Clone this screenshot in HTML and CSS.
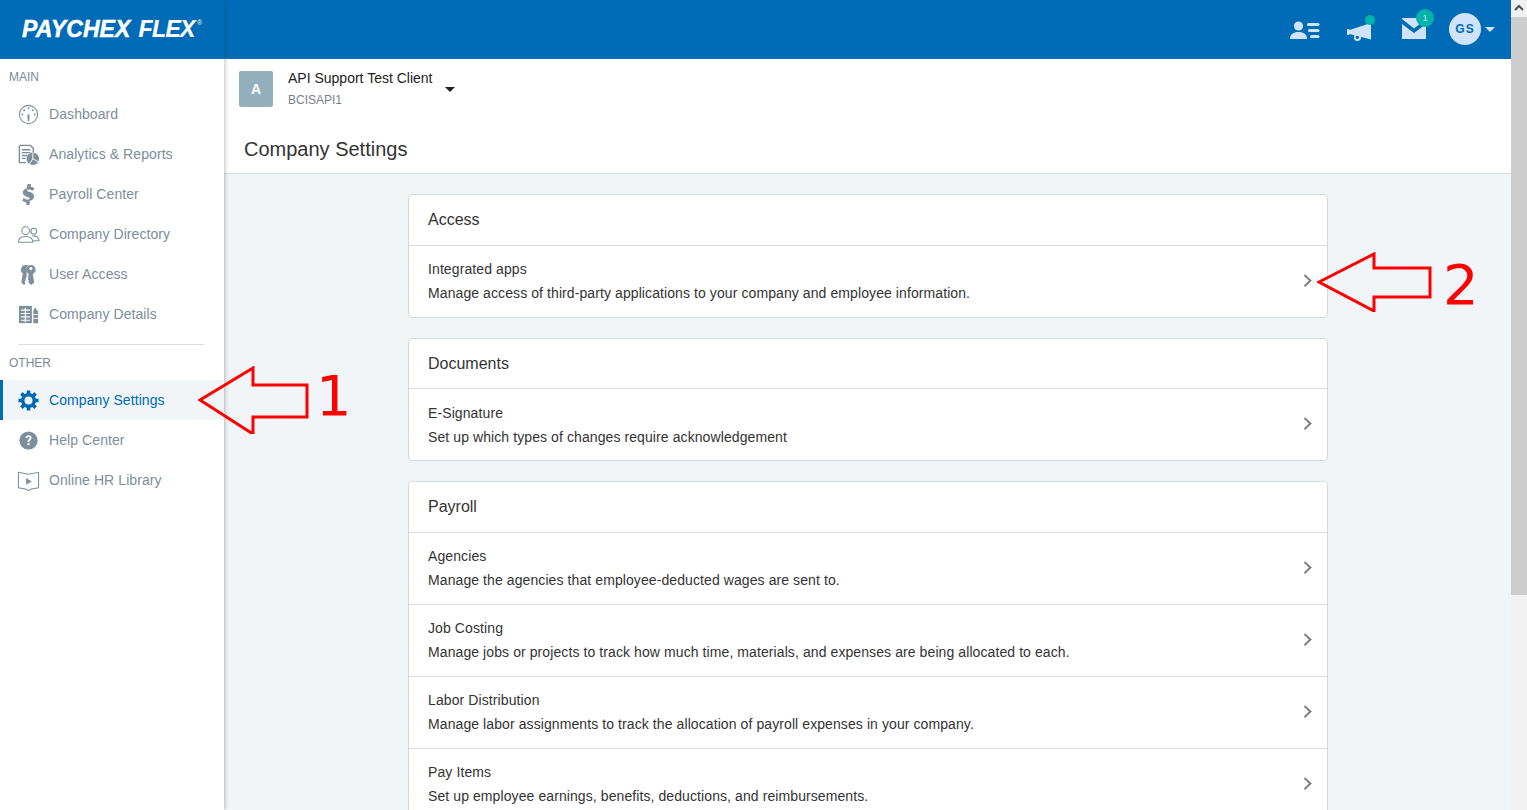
FILE: index.html
```html
<!DOCTYPE html>
<html lang="en">
<head>
<meta charset="utf-8">
<title>Company Settings</title>
<link rel="stylesheet" href="styles.css">
</head>
<body>
<div class="app">
  <aside class="sidebar">
    <div class="logo"><span class="logo-text">PAYCHEX</span><span class="logo-flex">FLEX</span><span class="logo-r">®</span></div>
    <nav class="nav">
      <div class="nav-label">MAIN</div>
      <a class="nav-item"><svg class="nav-icon" viewBox="0 0 24 24"><circle cx="12" cy="12" r="9.5" fill="none" stroke="currentColor" stroke-width="1.1"/><path d="M10.8 12h2.4l-.5 7h-1.4z" fill="currentColor"/><g fill="currentColor"><circle cx="12" cy="5.5" r="1"/><circle cx="7.5" cy="7.5" r="1"/><circle cx="16.5" cy="7.5" r="1"/><circle cx="5.6" cy="12" r="1"/><circle cx="18.4" cy="12" r="1"/></g></svg><span>Dashboard</span></a>
      <a class="nav-item"><svg class="nav-icon" viewBox="0 0 24 24"><path d="M2.500 2.500h11.500l3 3V10M2.500 2.500v18h7" fill="none" stroke="currentColor" stroke-width="1.500"/><path d="M5 7h9M5 10h9M5 13h6M5 16h4" stroke="currentColor" stroke-width="1.400"/><circle cx="16.500" cy="16.500" r="6.500" fill="currentColor"/><path d="M16.500 16.500v-6.500M16.500 16.500l5.500 3M16.500 16.500l-3.500 5.500" stroke="#fff" stroke-width="1"/></svg><span>Analytics &amp; Reports</span></a>
      <a class="nav-item"><svg class="nav-icon" viewBox="0 0 24 24"><path d="M11 1h3.500l-.2 2.800c1.500.2 2.800.7 3.900 1.400l-1.700 3c-1.500-.9-3-1.400-4.400-1.400-1 0-1.600.4-1.600 1 0 .8 1 1 3 1.700 3 1 4.300 2.300 4.300 4.600 0 2.400-1.700 4-4.400 4.400L13.200 23H9.700l.2-2.600c-1.800-.2-3.400-.9-4.600-1.800l1.700-3c1.400 1 3 1.700 4.400 1.700 1.100 0 1.800-.4 1.800-1.100 0-.8-1-1.100-3-1.800-2.800-.9-4.100-2.200-4.100-4.400 0-2.200 1.600-3.900 4-4.300z" fill="currentColor"/></svg><span>Payroll Center</span></a>
      <a class="nav-item"><svg class="nav-icon" viewBox="0 0 24 24"><g fill="none" stroke="currentColor" stroke-width="1.100"><circle cx="9" cy="8" r="4"/><circle cx="17.500" cy="8.500" r="3"/><path d="M1.500 20c0-4 3-6 7.500-6s7.500 2 7.500 6z"/><path d="M16 13.500c4-.5 7 1.500 7 5h-6"/></g></svg><span>Company Directory</span></a>
      <a class="nav-item"><svg class="nav-icon" viewBox="0 0 24 24"><g fill="currentColor"><path d="M9 2a5 5 0 0 0-3 8.900L4.500 20.500l3 2.500 1.200-2-.7-1.500 1.200-1.500-.4-1.500 1.200-1.500L10 11V7.500a3.500 3.500 0 0 1 2-4.800A5 5 0 0 0 9 2z"/><path d="M14.500 2a5 5 0 0 0-2.500 9.300l-.5 5.700 1 1.500-.7 1.500 2.700 3 3.500-2.500-1.500-9a5 5 0 0 0-2-9.500zm0 2.200a1.600 1.600 0 1 1 0 3.200 1.600 1.600 0 0 1 0-3.200z" fill-rule="evenodd"/></g></svg><span>User Access</span></a>
      <a class="nav-item"><svg class="nav-icon" viewBox="0 0 24 24"><path d="M2 3h13.500v18H2z" fill="currentColor"/><path d="M4 7.500h9.500M4 11h9.500M4 14.500h9.500M4 18h9.500M8.700 5v15" stroke="#fff" stroke-width="1.200"/><path d="M17 21V8l2-3.500L21 8h1v13z" fill="currentColor"/><path d="M17 12h5M17 16h5" stroke="#fff" stroke-width="1"/></svg><span>Company Details</span></a>
      <div class="nav-divider"></div>
      <div class="nav-label nav-label-other">OTHER</div>
      <a class="nav-item nav-item-active"><svg class="nav-icon" viewBox="0 0 24 24"><g stroke="currentColor" fill="none"><circle cx="12" cy="12" r="6" stroke-width="3.600"/><path d="M12 1.500V6M12 18v4.500M1.500 12H6M18 12h4.500M4.600 4.600l3.200 3.200M16.200 16.200l3.200 3.200M4.600 19.400l3.200-3.200M16.200 7.800l3.200-3.200" stroke-width="3.800"/></g></svg><span>Company Settings</span></a>
      <a class="nav-item"><svg class="nav-icon" viewBox="0 0 24 24"><circle cx="12" cy="12" r="9.500" fill="currentColor"/><path d="M8.800 9.500c.1-2 1.500-3 3.300-3 1.900 0 3.200 1.100 3.200 2.700 0 2.300-2.400 2.300-2.400 4.300h-2c0-2.800 2.300-2.900 2.300-4.200 0-.6-.5-1-1.100-1-.7 0-1.200.4-1.300 1.200z" fill="#fff"/><rect x="10.900" y="14.700" width="2.200" height="2.200" fill="#fff"/></svg><span>Help Center</span></a>
      <a class="nav-item"><svg class="nav-icon" viewBox="0 0 24 24"><path d="M1.500 3.500l10.500 2 10.500-2v16L14 21l-2 1.500L10 21l-8.500-1.500z" fill="none" stroke="currentColor" stroke-width="1.100"/><path d="M9.500 9.500l6 3.500-6 3.500z" fill="currentColor"/></svg><span>Online HR Library</span></a>
    </nav>
  </aside>
  <div class="content">
    <header class="topbar">
      <svg class="tool tool-people" viewBox="0 0 30 18"><circle cx="8.500" cy="5" r="4.600" fill="#cfe4fb"/><path d="M0 18c0-5 3.500-7 8.500-7s8.500 2 8.500 7z" fill="#cfe4fb"/><rect x="17" y="2" width="12.500" height="3" rx="1.500" fill="#cfe4fb"/><rect x="18" y="8" width="11.500" height="3" rx="1.500" fill="#cfe4fb"/><rect x="20" y="14" width="9.500" height="3" rx="1.500" fill="#cfe4fb"/></svg>
      <div class="tool tool-mega">
        <svg class="mega-svg" viewBox="0 0 25 19"><path d="M0 6h2l.5 1L24 0v16.500L14 14a3.700 3.700 0 0 1-7.200 1.500l.5-3.300L2.500 11 2 12H0z" fill="#cfe4fb"/><circle cx="10.300" cy="14.300" r="1.600" fill="#006bb6"/></svg>
        <span class="dot"></span>
      </div>
      <div class="tool tool-mail">
        <svg class="mail-svg" viewBox="0 0 24 21"><path d="M0 6l12 9 12-9v15H0z" fill="#cfe4fb"/><path d="M0 0h24v1L12 10.500 0 1z" fill="#cfe4fb"/></svg>
        <span class="badge">1</span>
      </div>
      <div class="avatar">GS</div>
      <span class="caret-light"></span>
    </header>
    <section class="client">
      <div class="client-tile">A</div>
      <div class="client-text">
        <div class="client-name">API Support Test Client</div>
        <div class="client-code">BCISAPI1</div>
      </div>
      <span class="caret-dark"></span>
    </section>
    <h1 class="page-title">Company Settings</h1>
    <main class="settings">
      <section class="card">
        <h2 class="card-title">Access</h2>
        <a class="row"><div><div class="row-title">Integrated apps</div><div class="row-desc">Manage access of third-party applications to your company and employee information.</div></div><span class="chev"></span></a>
      </section>
      <section class="card">
        <h2 class="card-title">Documents</h2>
        <a class="row"><div><div class="row-title">E-Signature</div><div class="row-desc">Set up which types of changes require acknowledgement</div></div><span class="chev"></span></a>
      </section>
      <section class="card">
        <h2 class="card-title">Payroll</h2>
        <a class="row"><div><div class="row-title">Agencies</div><div class="row-desc">Manage the agencies that employee-deducted wages are sent to.</div></div><span class="chev"></span></a>
        <a class="row"><div><div class="row-title">Job Costing</div><div class="row-desc">Manage jobs or projects to track how much time, materials, and expenses are being allocated to each.</div></div><span class="chev"></span></a>
        <a class="row"><div><div class="row-title">Labor Distribution</div><div class="row-desc">Manage labor assignments to track the allocation of payroll expenses in your company.</div></div><span class="chev"></span></a>
        <a class="row"><div><div class="row-title">Pay Items</div><div class="row-desc">Set up employee earnings, benefits, deductions, and reimbursements.</div></div><span class="chev"></span></a>
      </section>
    </main>
  </div>
  <div class="scrollbar">
    <div class="scroll-btn"><svg class="scroll-arrow" viewBox="0 0 16 16"><path d="M4 10l4-4 4 4" fill="none" stroke="#505050" stroke-width="2"/></svg></div>
    <div class="scroll-thumb"></div>
  </div>
</div>
<svg class="callout callout-one" viewBox="0 0 112 68"><path d="M2 34L55 2v17h54v32H55v17z" fill="none" stroke="#fe0000" stroke-width="3"/></svg>
<div class="callout-num callout-num-one">1</div>
<svg class="callout callout-two" viewBox="0 0 116 60"><path d="M2 30L57 2v14h56v29H57v14z" fill="none" stroke="#fe0000" stroke-width="3"/></svg>
<div class="callout-num callout-num-two">2</div>
</body>
</html>
```
FILE: styles.css
```css
* { box-sizing: border-box; }
html, body { margin: 0; height: 100%; overflow: hidden; }
body { font-family: "Liberation Sans", Arial, sans-serif; font-size: 14px; color: #333; background: #f1f5f8; }
.app { display: flex; height: 810px; overflow: hidden; }

.sidebar { width: 224px; flex: none; background: #fff; box-shadow: 1px 0 4px rgba(60, 70, 80, .35); position: relative; z-index: 2; }
.logo { height: 59px; background: #006bb6; color: #fff; display: flex; align-items: flex-start; padding: 15px 0 0 22px; font-style: italic; font-weight: bold; font-size: 23px; line-height: 28px; }
.logo-text { letter-spacing: .1px; -webkit-text-stroke: .5px #fff; }
.logo-flex { margin-left: 8px; letter-spacing: -.6px; -webkit-text-stroke: .2px #fff; }
.logo-r { font-size: 7px; line-height: 10px; font-style: normal; font-weight: normal; margin: 3px 0 0 2px; }

.nav { display: flex; flex-direction: column; }
.nav-label { font-size: 12px; line-height: 14px; color: #7a8b99; padding: 11px 0 0 9px; height: 35px; }
.nav-label-other { padding-top: 11px; height: 35px; }
.nav-item { height: 40px; display: flex; align-items: center; gap: 9px; padding-left: 17px; color: #7d8e9c; letter-spacing: .08px; }
.nav-icon { width: 23px; height: 23px; flex: none; }
.nav-item-active { background: #f1f5f8; color: #0069b4; border-left: 3px solid #006bb6; padding-left: 14px; }
.nav-divider { height: 1px; background: #d9dcdf; margin: 10px 20px 0 19px; }

.content { flex: 1; min-width: 0; display: flex; flex-direction: column; height: 810px; overflow: hidden; }
.topbar { height: 59px; flex: none; background: #006bb6; display: flex; align-items: center; justify-content: flex-end; padding-right: 16px; }
.tool { flex: none; }
.tool-people { width: 30px; height: 18px; margin-right: 25px; margin-top: 1px; }
.tool-mega { width: 30px; height: 24px; margin-right: 26px; position: relative; }
.mega-svg { position: absolute; left: 2px; top: 5px; width: 25px; height: 19px; }
.dot { position: absolute; right: 0; top: -3px; width: 10px; height: 10px; border-radius: 50%; background: #00b4ab; }
.tool-mail { width: 34px; height: 32px; margin-right: 14px; position: relative; }
.mail-svg { position: absolute; left: 1px; top: 4px; width: 24px; height: 21px; }
.badge { position: absolute; right: 1px; top: -5px; width: 18px; height: 18px; border-radius: 50%; background: #00b4ab; color: #cfe4fb; font-size: 9px; line-height: 18px; text-align: center; }
.avatar { width: 32px; height: 32px; margin-top: -1px; border-radius: 50%; background: #cfe4fb; color: #006bb6; font-size: 12px; font-weight: bold; line-height: 32px; text-align: center; letter-spacing: 1px; }
.caret-light { width: 0; height: 0; margin-left: 4px; border-left: 5px solid transparent; border-right: 5px solid transparent; border-top: 5px solid #cfe4fb; }

.client { height: 60px; flex: none; background: #fff; display: flex; align-items: flex-start; padding: 12px 0 0 15px; }
.client-tile { width: 34px; height: 36px; border-radius: 2px; background: #93afbd; color: #fff; font-weight: bold; font-size: 14px; line-height: 36px; text-align: center; }
.client-text { margin-left: 15px; }
.client-name { font-size: 14px; line-height: 16px; margin-top: -1px; color: #222; }
.client-code { font-size: 12px; line-height: 14px; color: #7a7f8c; margin-top: 7px; }
.caret-dark { width: 0; height: 0; margin: 16px 0 0 13px; border-left: 5px solid transparent; border-right: 5px solid transparent; border-top: 5px solid #222; }

.page-title { margin: 0; height: 55px; flex: none; background: #fff; border-bottom: 1px solid #d9dcdf; font-size: 20px; font-weight: normal; line-height: 24px; color: #333; padding: 18px 0 0 20px; }

.settings { width: 920px; margin: 20px 0 0 184px; display: flex; flex-direction: column; gap: 20px; flex: none; }
.card { background: #fff; border: 1px solid #d5d9dc; border-radius: 4px; }
.card-title { margin: 0; height: 49.5px; font-size: 16px; font-weight: normal; line-height: 50px; color: #333; padding-left: 19px; }
.row { height: 72px; border-top: 1px solid #d9dcdf; display: flex; align-items: center; justify-content: space-between; padding: 0 18px 0 19px; }
.row-title { font-size: 14px; line-height: 16px; color: #333; letter-spacing: .1px; }
.row-desc { font-size: 14px; line-height: 16px; margin-top: 8px; color: #333; letter-spacing: .09px; }
.chev { width: 8.500px; height: 8.500px; margin-bottom: 2px; border-top: 2px solid #808080; border-right: 2px solid #808080; transform: rotate(45deg); flex: none; }

.scrollbar { width: 16px; flex: none; background: #f1f1f1; display: flex; flex-direction: column; position: relative; z-index: 3; }
.scroll-btn { height: 17px; flex: none; background: #f1f1f1; }
.scroll-arrow { width: 16px; height: 16px; display: block; }
.scroll-thumb { height: 578px; background: #cdcdcd; flex: none; }

.callout { position: absolute; z-index: 5; }
.callout-one { left: 198px; top: 366px; width: 112px; height: 68px; }
.callout-two { left: 1317px; top: 252px; width: 116px; height: 60px; }
.callout-num { position: absolute; z-index: 5; color: #fe0000; font-family: "DejaVu Sans", sans-serif; font-size: 56px; line-height: 56px; }
.callout-num-one { left: 316px; top: 368px; }
.callout-num-two { left: 1443px; top: 257px; }
```
